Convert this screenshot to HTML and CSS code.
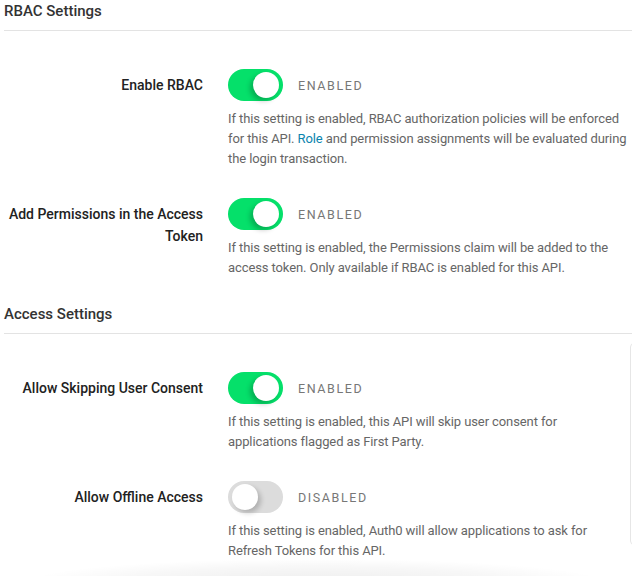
FILE: index.html
```html
<!DOCTYPE html>
<html>
<head>
<meta charset="utf-8">
<link rel="stylesheet" href="styles.css">
</head>
<body>
<div class="page">
  <section class="group">
    <h2 class="group-title">RBAC Settings</h2>
    <div class="rows">
      <div class="row">
        <div class="label">Enable RBAC</div>
        <div class="control">
          <div class="switch-line">
            <span class="switch on"><span class="knob"></span></span>
            <span class="state">ENABLED</span>
          </div>
          <p class="desc">If this setting is enabled, RBAC authorization policies will be enforced for this API. <a class="link" href="#">Role</a> and permission assignments will be evaluated during the login transaction.</p>
        </div>
      </div>
      <div class="row">
        <div class="label">Add Permissions in the Access Token</div>
        <div class="control">
          <div class="switch-line">
            <span class="switch on"><span class="knob"></span></span>
            <span class="state">ENABLED</span>
          </div>
          <p class="desc">If this setting is enabled, the Permissions claim will be added to the access token. Only available if RBAC is enabled for this API.</p>
        </div>
      </div>
    </div>
  </section>
  <section class="group group-second">
    <h2 class="group-title">Access Settings</h2>
    <div class="rows">
      <div class="row">
        <div class="label">Allow Skipping User Consent</div>
        <div class="control">
          <div class="switch-line">
            <span class="switch on"><span class="knob"></span></span>
            <span class="state">ENABLED</span>
          </div>
          <p class="desc">If this setting is enabled, this API will skip user consent for applications flagged as First Party.</p>
        </div>
      </div>
      <div class="row">
        <div class="label">Allow Offline Access</div>
        <div class="control">
          <div class="switch-line">
            <span class="switch off"><span class="knob"></span></span>
            <span class="state">DISABLED</span>
          </div>
          <p class="desc">If this setting is enabled, Auth0 will allow applications to ask for Refresh Tokens for this API.</p>
        </div>
      </div>
    </div>
  </section>
  <div class="side-card"></div>
  <div class="bottom-shade"></div>
</div>
</body>
</html>
```
FILE: styles.css
```css
html, body {
  margin: 0;
  padding: 0;
  background: #fff;
}
body {
  font-family: Roboto, "Liberation Sans", Arial, sans-serif;
  color: #333;
  width: 632px;
  height: 576px;
  overflow: hidden;
}
.page {
  position: relative;
  width: 632px;
  height: 576px;
  padding-left: 4px;
  box-sizing: border-box;
  overflow: hidden;
}
.group-title {
  margin: 0;
  font-size: 15px;
  font-weight: 500;
  line-height: 22px;
  color: #333;
  padding-bottom: 8px;
  border-bottom: 1px solid #e3e3e3;
}
.group-second {
  margin-top: 25px;
}
.rows {
  display: flex;
  flex-direction: column;
  gap: 29px;
  padding-top: 38px;
}
.row {
  display: grid;
  grid-template-columns: 199px 1fr;
  column-gap: 25px;
}
.label {
  text-align: right;
  font-size: 14px;
  font-weight: 500;
  line-height: 22px;
  padding-top: 5px;
  color: #222;
}
.switch-line {
  display: flex;
  align-items: center;
  gap: 15px;
  height: 32px;
}
.switch {
  position: relative;
  width: 55px;
  height: 32px;
  border-radius: 16px;
  flex: none;
}
.switch.on {
  background: #05e06a;
}
.switch.off {
  background: #dcdcdc;
}
.knob {
  position: absolute;
  top: 3px;
  width: 26px;
  height: 26px;
  border-radius: 50%;
  background: #fff;
}
.switch.on .knob {
  right: 4px;
  box-shadow: -3px 3px 5px rgba(0, 0, 0, 0.22);
}
.switch.off .knob {
  left: 4px;
  box-shadow: 3px 3px 5px rgba(0, 0, 0, 0.2);
}
.state {
  font-size: 12.5px;
  letter-spacing: 1.6px;
  color: #777;
  font-weight: 400;
}
.desc {
  margin: 8px 0 0;
  font-size: 13px;
  line-height: 20px;
  color: #666;
  max-width: 400px;
  letter-spacing: -0.1px;
}
.link {
  color: #0a84ae;
  text-decoration: none;
}
.side-card {
  position: absolute;
  left: 630px;
  top: 343px;
  width: 12px;
  height: 202px;
  border: 1px solid #e6e6e6;
  border-radius: 4px;
  box-sizing: border-box;
}
.bottom-shade {
  position: absolute;
  left: 40px;
  right: 40px;
  bottom: -30px;
  height: 46px;
  background: radial-gradient(ellipse at center, rgba(0, 0, 0, 0.07) 0%, rgba(0, 0, 0, 0.03) 50%, rgba(0, 0, 0, 0) 75%);
}
```
